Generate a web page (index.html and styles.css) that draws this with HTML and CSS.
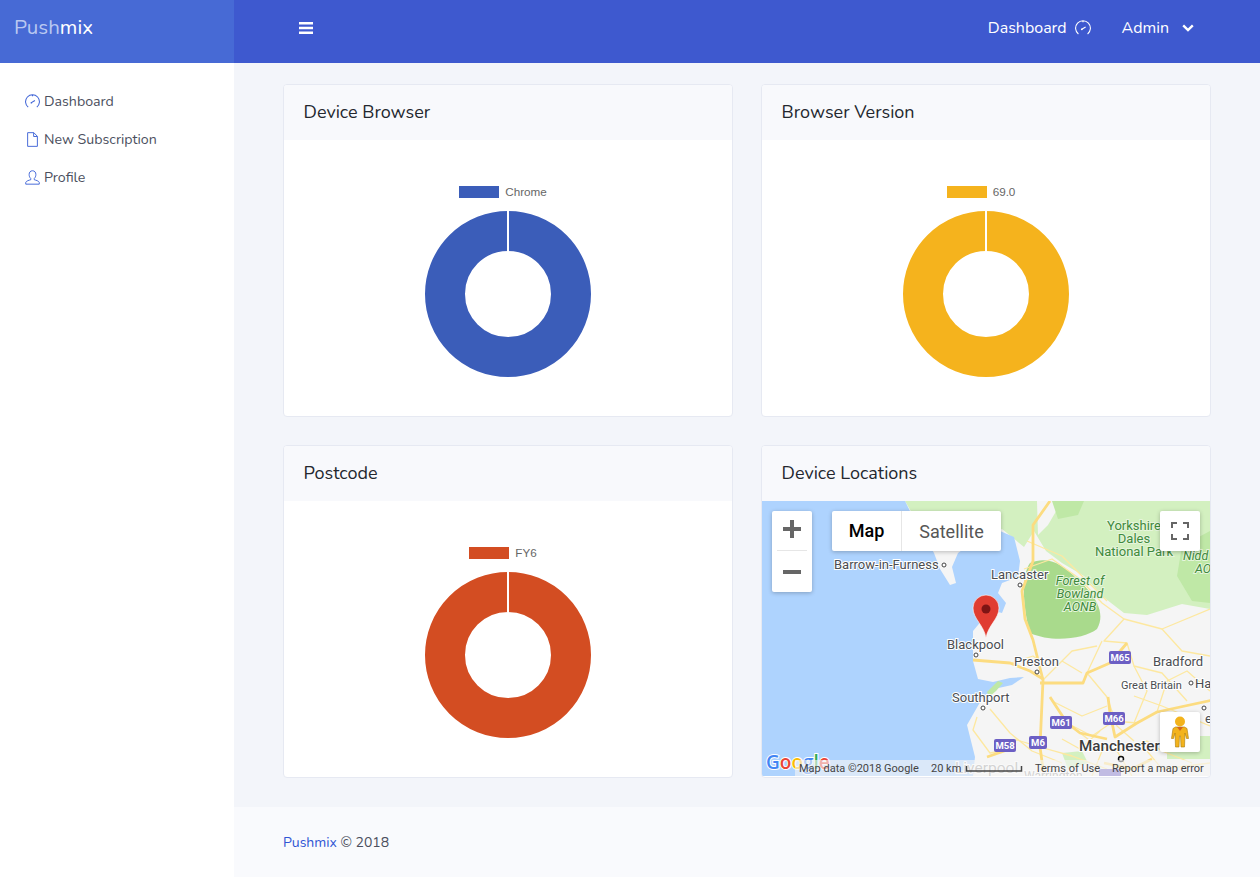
FILE: index.html
```html
<!DOCTYPE html>
<html lang="en">

<head>
    <meta charset="UTF-8">
    <meta name="viewport" content="width=device-width, initial-scale=1.0">
    <title>Pushmix Dashboard</title>
    <link rel="stylesheet" href="styles.css">
</head>

<body>
    <header class="topbar">
        <a class="brand"><span class="brand-light">Push</span>mix</a>
        <div class="topbar-main">
            <svg class="burger" viewBox="0 0 14 12"><path d="M0 0h14v2.4H0zM0 4.8h14v2.4H0zM0 9.600h14V12H0z" /></svg>
            <div class="topbar-links">
                <a class="topbar-link">Dashboard
                    <svg class="gauge-top" viewBox="0 0 16 16"><use href="#icon-gauge" /></svg>
                </a>
                <a class="topbar-link admin">Admin
                    <svg class="chevron" viewBox="0 0 12 8"><path d="M1.2 1.4L6 6l4.8-4.6" /></svg>
                </a>
            </div>
        </div>
    </header>

    <svg class="icon-defs">
        <symbol id="icon-gauge" viewBox="0 0 16 16">
            <path d="M3.400 14A7.400 7.400 0 1 1 12.600 14M8 .8v1.500" fill="none" stroke="currentColor" stroke-width="1.100" />
            <path d="M6.800 9.200l3.800-2.200" fill="none" stroke="currentColor" stroke-width="1.200" />
            <circle cx="6.800" cy="9.300" r=".9" fill="currentColor" />
        </symbol>
    </svg>

    <div class="layout">
        <nav class="sidebar">
            <a class="nav-item">
                <svg class="nav-icon" viewBox="0 0 16 16"><use href="#icon-gauge" /></svg>
                Dashboard
            </a>
            <a class="nav-item">
                <svg class="nav-icon" viewBox="0 0 16 16"><path d="M2.800.7h6.600l3.800 3.900v10.700H2.800zM9.200.9v3.900h3.900" fill="none" stroke="currentColor" /></svg>
                New Subscription
            </a>
            <a class="nav-item">
                <svg class="nav-icon" viewBox="0 0 16 16"><path d="M8 .8c2.300 0 3.600 1.700 3.600 4 0 1.800-.7 3.400-1.700 4.200v1.400c1.900.5 4.800 1.300 5.300 2.800v1.900H.8v-1.900c.5-1.500 3.400-2.300 5.300-2.800V9C5.100 8.200 4.400 6.600 4.400 4.800c0-2.300 1.300-4 3.600-4z" fill="none" stroke="currentColor" /></svg>
                Profile
            </a>
        </nav>

        <div class="content">
            <main class="cards">
                <section class="card">
                    <h2 class="card-title">Device Browser</h2>
                    <div class="chart">
                        <div class="legend"><span class="legend-box blue"></span><span class="legend-text">Chrome</span></div>
                        <svg class="donut blue-ring" viewBox="0 0 166 166">
                            <circle cx="83" cy="83" r="63" />
                            <path d="M83 0v40" />
                        </svg>
                    </div>
                </section>
                <section class="card">
                    <h2 class="card-title">Browser Version</h2>
                    <div class="chart">
                        <div class="legend"><span class="legend-box yellow"></span><span class="legend-text">69.0</span></div>
                        <svg class="donut yellow-ring" viewBox="0 0 166 166">
                            <circle cx="83" cy="83" r="63" />
                            <path d="M83 0v40" />
                        </svg>
                    </div>
                </section>
                <section class="card">
                    <h2 class="card-title">Postcode</h2>
                    <div class="chart">
                        <div class="legend"><span class="legend-box red"></span><span class="legend-text">FY6</span></div>
                        <svg class="donut red-ring" viewBox="0 0 166 166">
                            <circle cx="83" cy="83" r="63" />
                            <path d="M83 0v40" />
                        </svg>
                    </div>
                </section>
                <section class="card">
                    <h2 class="card-title">Device Locations</h2>
                    <div class="map">
                        <svg class="map-canvas" viewBox="0 0 448 275">
                            <!-- land, parks, water -->
                            <rect width="448" height="275" fill="#f5f5f5" />
                            <path d="M143 0H448V108L420 103L385 114L362 112L340 95L322 75L300 62L284 50L272 30L262 46L240 28L200 42L172 50Z" fill="#d3f0c0" />
                            <path d="M275 0H300L286 24L276 34Z" fill="#f5f5f5" />
                            <path d="M268 62C285 55 300 62 315 78C332 92 345 112 335 128C322 138 290 142 268 132C262 110 258 76 268 62Z" fill="#a9da8c" />
                            <path d="M290 0H322L316 14L296 18Z" fill="#bfe8a6" />
                            <path d="M420 45L448 30V102L430 100L415 75Z" fill="#bfe8a6" />
                            <path d="M405 245L430 235H448V258H405Z" fill="#d3f0c0" />
                            <path d="M300 252L320 250L326 262L306 268Z" fill="#d3f0c0" />
                            <path d="M0 0H143L152 18L165 40L172 52L178 68L188 84L194 82L190 66L196 52L215 38L238 30L252 36L258 60L256 76L240 82L236 92L244 102L240 112L225 108L221 118L211 130L211 160L216 178L231 181L248 177L262 176L250 184L232 188L221 196L205 224L213 256L211 275H0Z" fill="#aed3fe" />
                            <path d="M225 191L236 180L241 182L234 190L227 196Z" fill="#bfe8a6" />

                            <!-- roads -->
                            <g class="roads">
                                <path d="M262 68L290 58L318 78L340 102L362 118L400 128L448 108" />
                                <path d="M265 40L300 55L330 85L345 100" />
                                <path d="M362 118L342 140L365 142L372 165L400 172L425 200" />
                                <path d="M340 140L325 172L345 196L355 225L372 240" />
                                <path d="M281 179L300 160L320 172M300 160L310 150L335 145" />
                                <path d="M215 216L211 229L228 252L245 249M228 208L248 232L270 250L300 262" />
                                <path d="M238 240L255 239L278 246L310 255L345 268" />
                                <path d="M318 232L335 245L355 250L385 240L400 250L430 262" />
                                <path d="M355 250L370 275M340 250L330 275M300 238L318 248L338 230" />
                                <path d="M372 165L385 190L372 222M395 211L405 180L425 170L448 190" />
                                <path d="M400 128L420 150L448 155M372 195L400 205L448 225" />
                                <path d="M290 200L320 215L345 205M250 162L271 155L285 165" />
                                <path d="M305 222L330 235L352 220L375 222M385 250L400 268L448 262" />
                            </g>
                            <g class="roads-major">
                                <path d="M288 0L271 24L271 60L260 90L263 118L271 139L281 179L278 246L282 275" />
                                <path d="M211 159L248 162L268 170L281 178" />
                                <path d="M278 182L321 182L325 172L348 162L365 142" />
                                <path d="M288 196L305 222L318 232L345 238" />
                                <path d="M346 196L348 212L353 236L375 222L395 211L451 199" />
                                <path d="M342 262L370 268L390 258" />
                                <path d="M225 256L245 249" />
                            </g>

                            <!-- shields -->
                            <g class="shield"><rect x="347" y="150" width="22" height="13" rx="2" /><text x="358" y="160">M65</text></g>
                            <g class="shield"><rect x="288" y="215" width="22" height="13" rx="2" /><text x="299" y="225">M61</text></g>
                            <g class="shield"><rect x="341" y="211" width="22" height="13" rx="2" /><text x="352" y="221">M66</text></g>
                            <g class="shield"><rect x="267" y="235" width="18" height="13" rx="2" /><text x="276" y="245">M6</text></g>
                            <g class="shield"><rect x="232" y="238" width="22" height="13" rx="2" /><text x="243" y="248">M58</text></g>
                            <g class="shield"><rect x="337" y="268" width="22" height="13" rx="2" /></g>

                            <!-- town dots -->
                            <g class="dot">
                                <circle cx="182" cy="64" r="2" />
                                <circle cx="258" cy="84" r="2" />
                                <circle cx="214" cy="154" r="2" />
                                <circle cx="275" cy="171" r="2" />
                                <circle cx="221" cy="207" r="2" />
                                <circle cx="429" cy="182" r="2" />
                                <circle cx="442" cy="207" r="2" />
                                <circle cx="359" cy="258" r="2.500" class="dot-big" />
                            </g>

                            <!-- labels -->
                            <g class="label">
                                <text x="72" y="68">Barrow-in-Furness</text>
                                <text x="229" y="78">Lancaster</text>
                                <text x="185" y="148">Blackpool</text>
                                <text x="252" y="165">Preston</text>
                                <text x="391" y="165">Bradford</text>
                                <text x="190" y="201">Southport</text>
                                <text x="433" y="187">Ha</text>
                                <text x="443" y="222">er</text>
                                <text class="label-small" x="359" y="188">Great Britain</text>
                                <text class="label-city" x="317" y="250">Manchester</text>
                                <text class="label-faint" x="193" y="272">Liverpool</text>
                                <text class="label-faint label-small" x="262" y="279">Warrington</text>
                            </g>
                            <g class="label-park">
                                <text x="372" y="29">Yorkshire</text>
                                <text x="372" y="42">Dales</text>
                                <text x="372" y="55">National Park</text>
                                <text class="park-italic" x="318" y="84">Forest of</text>
                                <text class="park-italic" x="318" y="97">Bowland</text>
                                <text class="park-italic" x="318" y="110">AONB</text>
                                <text class="park-italic park-edge" x="421" y="59">Nidd</text>
                                <text class="park-italic park-edge" x="433" y="72">AO</text>
                            </g>

                            <!-- marker -->
                            <path d="M224 137C222 124 211 118 211 107A13 13 0 1 1 237 107C237 118 226 124 224 137Z" fill="#e03c31" stroke="#fff" stroke-width=".6" />
                            <circle cx="224" cy="108" r="4.500" fill="#7e1414" />

                            <!-- logo and attribution line -->
                            <text class="google" x="4" y="268"><tspan fill="#4285f4">G</tspan><tspan fill="#ea4335">o</tspan><tspan fill="#fbbc05">o</tspan><tspan fill="#4285f4">g</tspan><tspan fill="#34a853">l</tspan><tspan fill="#ea4335">e</tspan></text>
                            <rect x="33" y="259" width="415" height="16" fill="#f5f5f5" fill-opacity=".62" />
                            <g class="attrib">
                                <text x="37" y="271">Map data ©2018 Google</text>
                                <text x="169" y="271">20 km</text>
                                <text x="273" y="271">Terms of Use</text>
                                <text x="350" y="271">Report a map error</text>
                            </g>
                            <path d="M204.500 265v5h55v-5" fill="none" stroke="#444" stroke-width="1.500" />
                        </svg>

                        <div class="map-btn zoom-ctl">
                            <svg class="zoom-sign" viewBox="0 0 18 18"><path d="M0 7h7V0h4v7h7v4h-7v7H7v-7H0z" /></svg>
                            <span class="zoom-rule"></span>
                            <svg class="zoom-sign" viewBox="0 0 18 18"><path d="M0 7h18v4H0z" /></svg>
                        </div>
                        <div class="map-btn type-ctl">
                            <span class="type-on">Map</span>
                            <span class="type-off">Satellite</span>
                        </div>
                        <div class="map-btn full-ctl">
                            <svg class="full-icon" viewBox="0 0 18 18"><path d="M0 6V0h6v2H2v4zM12 0h6v6h-2V2h-4zM18 12v6h-6v-2h4v-4zM6 18H0v-6h2v4h4z" /></svg>
                        </div>
                        <div class="map-btn pegman">
                            <svg class="pegman-icon" viewBox="0 0 18 32">
                                <circle cx="9" cy="5.500" r="5" fill="#f3b31c" />
                                <path d="M4.500 11h9l2.500 1.500 1.500 10h-2L14 17l-.5 14h-3.500l-.5-11h-1L8 31H4.500L4 17l-1.500 5.500h-2l1.500-10z" fill="#f3b31c" stroke="#a87a0a" stroke-width=".6" />
                                <path d="M6 11h6l-3 4z" fill="#d4641c" />
                            </svg>
                        </div>
                    </div>
                </section>
            </main>

            <footer class="footer"><a class="footer-link">Pushmix</a> © 2018</footer>
        </div>
    </div>
</body>

</html>
```

FILE: styles.css
```css
* {
    padding: 0;
    margin: 0;
    box-sizing: border-box;
}

body {
    font-family: "Nunito", "Open Sans", "Noto Sans", sans-serif;
    font-size: 14px;
    color: #4b4f5e;
    background: #f3f5fa;
}

.icon-defs {
    display: none;
}

/* top bar */
.topbar {
    display: flex;
    height: 63px;
    background: #3e59cf;
    color: #fff;
}

.brand {
    width: 234px;
    padding-left: 14px;
    background: #476ad5;
    font-size: 20.500px;
    font-weight: 400;
    line-height: 55px;
}

.brand-light {
    color: #b9c8f1;
}

.topbar-main {
    flex: 1;
    display: flex;
    align-items: center;
    justify-content: space-between;
    padding: 0 66px 0 65px;
    margin-top: -8px;
}

.burger {
    width: 14px;
    height: 12px;
    fill: #fff;
}

.topbar-links {
    display: flex;
    gap: 31px;
}

.topbar-link {
    display: flex;
    align-items: center;
    gap: 8px;
    font-size: 16px;
}

.gauge-top {
    width: 16px;
    height: 16px;
}

.admin {
    gap: 13px;
}

.chevron {
    width: 12px;
    height: 8px;
    fill: none;
    stroke: #fff;
    stroke-width: 2.400;
}

/* sidebar */
.layout {
    display: flex;
    height: 814px;
}

.sidebar {
    width: 234px;
    padding-top: 19px;
    background: #fff;
}

.nav-item {
    display: flex;
    align-items: center;
    gap: 4px;
    height: 38px;
    padding-left: 25px;
    font-size: 14.200px;
    font-weight: 400;
}

.nav-icon {
    width: 15px;
    height: 15px;
    color: #3e63d6;
}

/* cards */
.content {
    flex: 1;
    display: flex;
    flex-direction: column;
}

.cards {
    flex: 1;
    display: grid;
    grid-template-columns: 450px 450px;
    grid-template-rows: 333px 333px;
    gap: 28px;
    padding: 21px 0 0 49px;
}

.card {
    display: flex;
    flex-direction: column;
    background: #fff;
    border: 1px solid #e6e9f2;
    border-radius: 4px;
    overflow: hidden;
}

.card-title {
    height: 55px;
    padding-left: 19.600px;
    background: #f8f9fc;
    color: #23272e;
    font-size: 18px;
    font-weight: 400;
    line-height: 54px;
}

.chart {
    display: flex;
    flex-direction: column;
    align-items: center;
    padding-top: 46px;
}

.legend {
    display: flex;
    align-items: center;
    gap: 6px;
    height: 12px;
    margin-right: 10px;
    margin-bottom: 13px;
    font-family: "Liberation Sans", Arial, sans-serif;
    font-size: 11.700px;
    color: #666;
}

.legend-text {
    margin-top: -1px;
}

.legend-box {
    width: 40px;
    height: 12px;
}

.blue {
    background: #3b5db9;
}

.yellow {
    background: #f5b31d;
}

.red {
    background: #d34d22;
}

.donut {
    display: block;
    width: 166px;
    height: 166px;
    fill: none;
}

.donut circle {
    stroke-width: 40;
}

.donut path {
    stroke: #fff;
    stroke-width: 2;
}

.blue-ring circle {
    stroke: #3b5db9;
}

.yellow-ring circle {
    stroke: #f5b31d;
}

.red-ring circle {
    stroke: #d34d22;
}

/* map */
.map {
    position: relative;
    flex: 1;
    overflow: hidden;
}

.map-canvas {
    display: block;
    width: 448px;
    height: 275px;
    font-family: "Roboto", "Liberation Sans", sans-serif;
}

.roads,
.roads-major {
    fill: none;
    stroke-linejoin: round;
}

.roads {
    stroke: #fde8a0;
    stroke-width: 1.300;
}

.roads-major {
    stroke: #fcdc80;
    stroke-width: 2.800;
}

.shield rect {
    fill: #6c5fc4;
}

.shield text {
    fill: #fff;
    font-size: 9.500px;
    font-weight: 700;
    text-anchor: middle;
}

.dot circle {
    fill: #fff;
    stroke: #444;
    stroke-width: 1;
}

.dot .dot-big {
    stroke: #111;
    stroke-width: 1.500;
}

.label text {
    fill: #4a4d52;
    font-size: 13px;
    paint-order: stroke;
    stroke: #fff;
    stroke-width: 2px;
}

.label .label-small {
    font-size: 11px;
}

.label .label-city {
    fill: #3c3c3c;
    font-size: 15.200px;
    font-weight: 500;
}

.label .label-faint {
    fill: #9a9a9a;
    font-size: 15.500px;
}

.label .label-faint.label-small {
    font-size: 12px;
}

.label-park text {
    fill: #3f8a3c;
    font-size: 13px;
    text-anchor: middle;
    paint-order: stroke;
    stroke: #e6f5dc;
    stroke-width: 2px;
}

.label-park .park-italic {
    font-size: 12.500px;
    font-style: italic;
}

.label-park .park-edge {
    text-anchor: start;
}

.google {
    font-family: "Open Sans", sans-serif;
    font-size: 19px;
    font-weight: 600;
    paint-order: stroke;
    stroke: #fff;
    stroke-width: 2px;
}

.attrib text {
    fill: #444;
    font-size: 11px;
}

.map-btn {
    position: absolute;
    display: flex;
    background: #fff;
    border-radius: 2px;
    box-shadow: 0 1px 4px rgba(0, 0, 0, .25);
}

.zoom-ctl {
    left: 10px;
    top: 10px;
    flex-direction: column;
    align-items: center;
    width: 40px;
    height: 81px;
    padding-top: 9px;
    gap: 12px;
}

.zoom-sign {
    width: 18px;
    height: 18px;
    fill: #666;
}

.zoom-rule {
    width: 30px;
    height: 1px;
    background: #e6e6e6;
}

.type-ctl {
    left: 70px;
    top: 10px;
    height: 40px;
    align-items: center;
    font-family: "Roboto", "Liberation Sans", sans-serif;
    font-size: 18px;
}

.type-on {
    width: 70px;
    height: 40px;
    border-right: 1px solid #e6e6e6;
    color: #000;
    font-weight: 500;
    line-height: 40px;
    text-align: center;
}

.type-off {
    width: 99px;
    color: #565656;
    text-align: center;
}

.full-ctl {
    left: 398px;
    top: 10px;
    width: 40px;
    height: 40px;
    align-items: center;
    justify-content: center;
}

.full-icon {
    width: 18px;
    height: 18px;
    fill: #666;
}

.pegman {
    left: 398px;
    top: 211px;
    width: 40px;
    height: 40px;
    align-items: center;
    justify-content: center;
}

.pegman-icon {
    width: 18px;
    height: 32px;
}

/* footer */
.footer {
    height: 70px;
    padding-left: 49px;
    background: #f9fafd;
    font-size: 14px;
    line-height: 72px;
}

.footer-link {
    color: #2f55d4;
}
```
